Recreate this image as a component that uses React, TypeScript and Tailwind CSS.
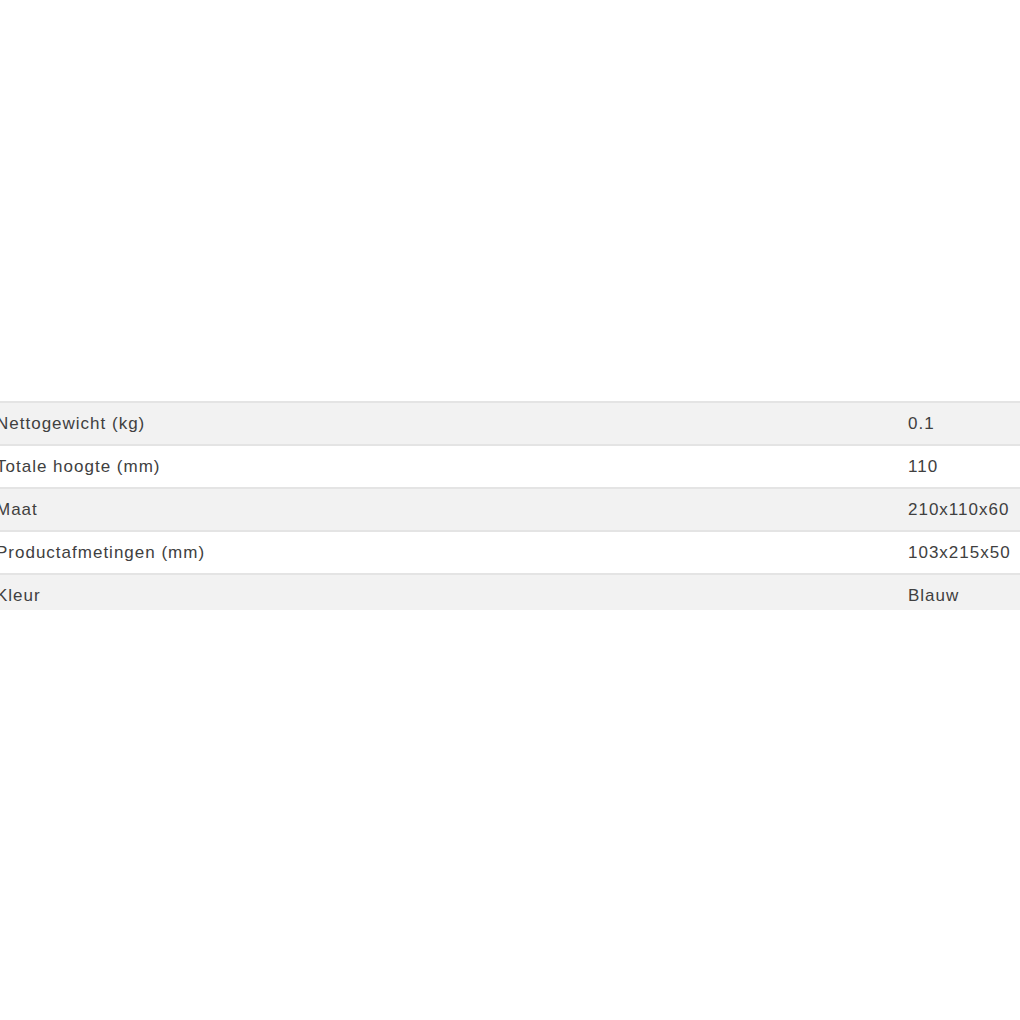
import React from "react";

const rows: [string, string][] = [
  ["Nettogewicht (kg)", "0.1"],
  ["Totale hoogte (mm)", "110"],
  ["Maat", "210x110x60"],
  ["Productafmetingen (mm)", "103x215x50"],
  ["Kleur", "Blauw"],
];

export default function App() {
  return (
    <div className="w-[1020px] h-[1020px] bg-white overflow-hidden relative" style={{ fontFamily: '"Liberation Sans", Arial, sans-serif' }}>
      <div className="pt-[401px] ml-[-4px]">
        {rows.map(([k, v], i) => (
          <div
            key={k}
            className={`flex items-start overflow-hidden border-t-2 border-[#e4e4e4] pt-[11px] leading-[20px] text-[17px] tracking-[1px] text-[#404040] ${i === rows.length - 1 ? "h-[37px]" : "h-[43px]"} ${i % 2 === 0 ? "bg-[#f2f2f2]" : "bg-white"}`}
          >
            <div className="w-[912px] shrink-0">{k}</div>
            <div className="whitespace-nowrap">{v}</div>
          </div>
        ))}
      </div>
    </div>
  );
}
